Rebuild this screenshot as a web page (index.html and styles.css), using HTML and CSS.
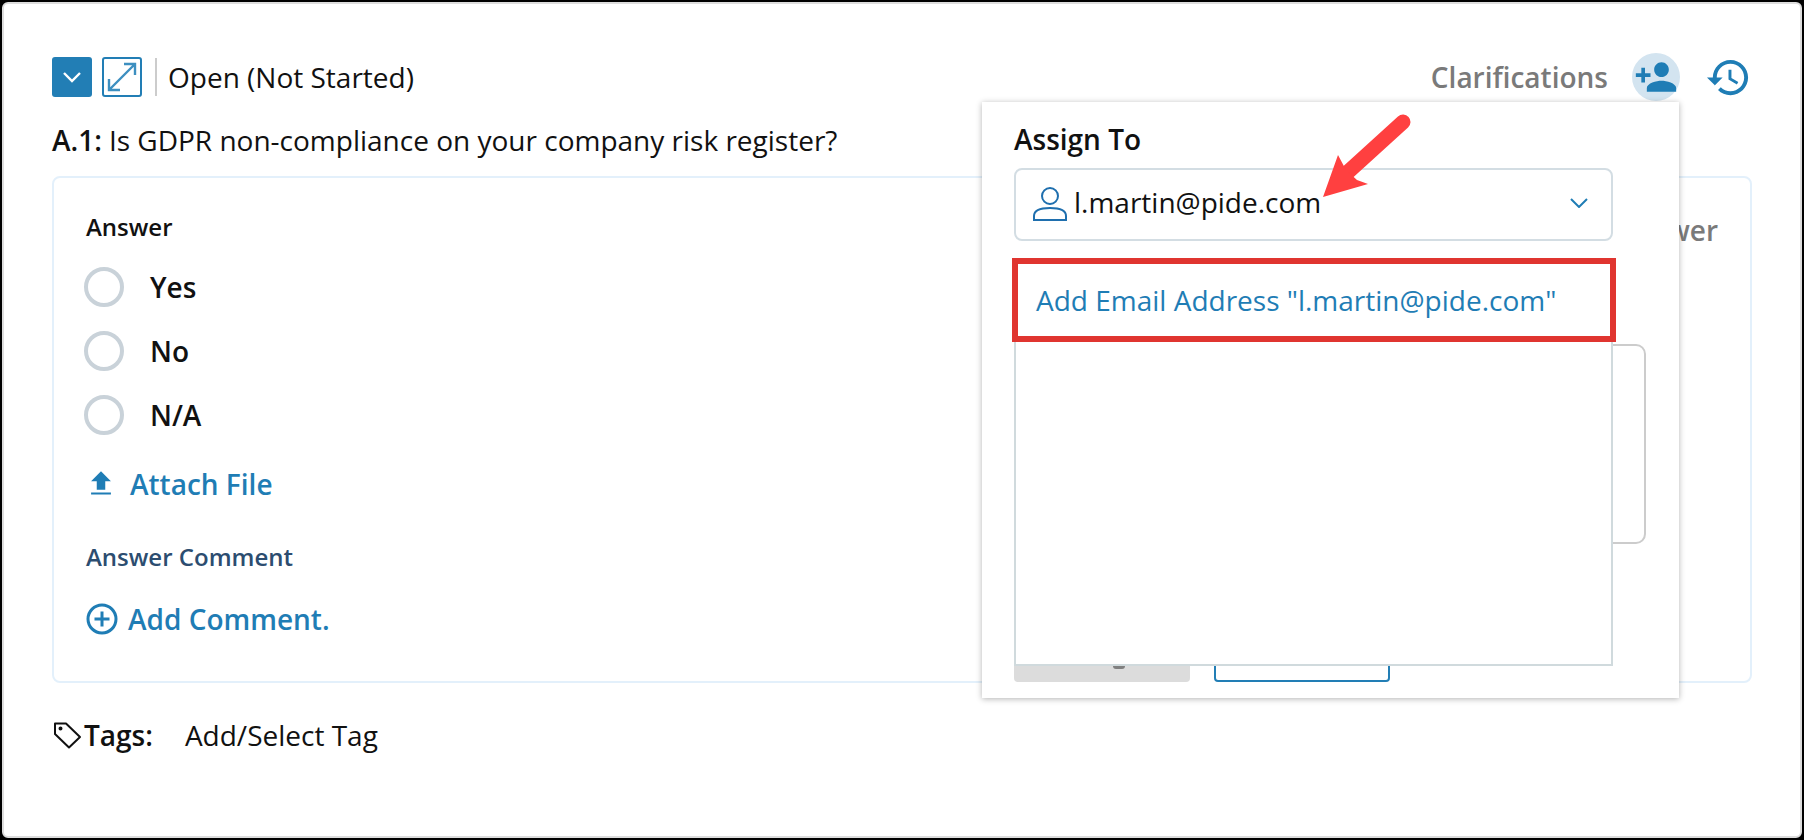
FILE: index.html
```html
<!DOCTYPE html>
<html lang="en">
<head>
    <meta charset="UTF-8">
    <meta name="viewport" content="width=device-width, initial-scale=1.0">
    <title>Question A.1</title>
    <link rel="stylesheet" href="styles.css">
</head>
<body>
    <div class="frame">
        <div class="headRow">
            <div class="headLeft">
                <span class="iconBtn solidBtn">
                    <svg width="20" height="12" viewBox="0 0 20 12"><path d="M2 2l8 8 8-8" fill="none" stroke="#fff" stroke-width="2.4"/></svg>
                </span>
                <span class="iconBtn lineBtn">
                    <svg width="30" height="30" viewBox="0 0 30 30" fill="none" stroke="#3d8fc0" stroke-width="2.4"><path d="M2 28L28 2M17 2h11v11M2 17v11h11"/></svg>
                </span>
                <span class="divider"></span>
                <span class="status">Open (Not Started)</span>
            </div>
            <div class="headRight">
                <span class="clarify">Clarifications</span>
                <span class="assignIcon">
                    <svg width="44" height="44" viewBox="0 0 24 24" fill="#1f7db5"><path d="M15 12c2.21 0 4-1.79 4-4s-1.79-4-4-4-4 1.79-4 4 1.79 4 4 4zm-9-2V7H4v3H1v2h3v3h2v-3h3v-2H6zm9 4c-2.67 0-8 1.34-8 4v2h16v-2c0-2.66-5.33-4-8-4z"/></svg>
                </span>
                <svg class="historyIcon" width="47" height="47" viewBox="0 0 24 24" fill="#1f7db5"><path d="M13 3c-4.97 0-9 4.03-9 9H1l3.89 3.89.07.14L9 12H6c0-3.87 3.13-7 7-7s7 3.13 7 7-3.13 7-7 7c-1.93 0-3.68-.79-4.94-2.06l-1.42 1.42C8.27 19.99 10.51 21 13 21c4.97 0 9-4.03 9-9s-4.03-9-9-9zm-1 5v5l4.28 2.54.72-1.21-3.5-2.08V8H12z"/></svg>
            </div>
        </div>

        <div class="question"><b>A.1:</b> <span>Is GDPR non-compliance on your company risk register?</span></div>

        <div class="card">
            <div class="cardMain">
                <div class="answerLabel">Answer</div>
                <div class="radioRow"><span class="radio"></span><span>Yes</span></div>
                <div class="radioRow"><span class="radio"></span><span>No</span></div>
                <div class="radioRow"><span class="radio"></span><span>N/A</span></div>
                <div class="attach">
                    <svg width="34" height="34" viewBox="0 0 24 24" fill="#1f7db5"><path d="M9 16h6v-6h4l-7-7-7 7h4zm-4 2h14v1.400H5z"/></svg>
                    <span>Attach File</span>
                </div>
                <div class="commentLabel">Answer Comment</div>
                <div class="addComment">
                    <svg width="32" height="32" viewBox="0 0 32 32" fill="none" stroke="#1f7db5" stroke-width="3"><circle cx="16" cy="16" r="14"/><path d="M8.500 16h15M16 8.500v15"/></svg>
                    <span>Add Comment.</span>
                </div>
            </div>
            <div class="answerLink">Answer</div>
        </div>

        <div class="tags">
            <svg width="30" height="30" viewBox="0 0 30 30" fill="none" stroke="#111" stroke-width="2" stroke-linejoin="round"><path d="M3 3.500h11l14 13.500-11 10.500L3 14z"/><circle cx="8.500" cy="8.500" r="1" fill="#111"/></svg>
            <b>Tags:</b>
            <span class="tagAdd">Add/Select Tag</span>
        </div>

        <div class="popup">
            <div class="popupLabel">Assign To</div>
            <div class="assignSelect">
                <svg width="36" height="36" viewBox="0 0 36 36" fill="none" stroke="#1f6fae" stroke-width="2"><circle cx="18" cy="10" r="8"/><path d="M2 34v-4c0-5 6-8 16-8s16 3 16 8v4z"/></svg>
                <span class="assignValue">l.martin@pide.com</span>
                <svg class="selectArrow" width="18" height="10" viewBox="0 0 18 10"><path d="M1 1l8 8 8-8" fill="none" stroke="#1f7db5" stroke-width="2"/></svg>
            </div>
            <div class="noteBox"></div>
            <div class="popupBtns">
                <span class="grayBtn"><i class="grayMark"></i></span>
                <span class="outlineBtn"></span>
            </div>
            <div class="assignMenu">
                <div class="assignItem">Add Email Address "l.martin@pide.com"</div>
            </div>
            <div class="redBox"></div>
        </div>

        <svg class="redArrow" width="100" height="100" viewBox="0 0 100 100">
            <path d="M83 10L28 60" stroke="#ff4040" stroke-width="15" stroke-linecap="round"/>
            <path d="M3 85L18 43 26 58 37 68 48 72z" fill="#ff4040"/>
        </svg>
    </div>
</body>
</html>
```

FILE: styles.css
```css
*{
    padding: 0px;
    margin: 0px;
    box-sizing: border-box;
}
body{
    margin: 0px;
    padding: 2px;
    background: #000;
    color: #111;
    font-family: "Open Sans", "Liberation Sans", sans-serif;
}
.frame{
    position: relative;
    width: 1800px;
    height: 836px;
    background: #fff;
    border: 2px solid #ddd;
    border-radius: 6px;
    padding: 53px 48px 0px;
    overflow: hidden;
}
.headRow{
    display: flex;
    justify-content: space-between;
    align-items: center;
    height: 40px;
}
.headLeft,
.headRight{
    display: flex;
    align-items: center;
}
.iconBtn{
    display: flex;
    align-items: center;
    justify-content: center;
    width: 40px;
    height: 40px;
    border-radius: 3px;
    margin-right: 10px;
}
.solidBtn{
    background: #227eb5;
}
.lineBtn{
    border: 2px solid #227eb5;
}
.divider{
    width: 2px;
    height: 38px;
    background: #ccc;
    margin: 0px 11px 0px 3px;
}
.status{
    font-size: 28px;
}
.clarify{
    font-size: 28px;
    font-weight: 600;
    color: #7a7a7a;
    margin-right: 24px;
}
.assignIcon{
    display: flex;
    align-items: center;
    justify-content: center;
    width: 48px;
    height: 48px;
    border-radius: 50%;
    background: #d3e4f0;
}
.historyIcon{
    margin: 0px 0px 0px 25px;
}
.question{
    display: flex;
    gap: 7px;
    margin-top: 24px;
    font-size: 28px;
    line-height: 38px;
}
.question b{
    font-weight: 600;
}
.card{
    display: flex;
    justify-content: space-between;
    height: 507px;
    margin-top: 17px;
    padding: 33px 32px;
    border: 2px solid #e3f0fb;
    border-radius: 8px;
}
.answerLabel{
    font-size: 24px;
    font-weight: 600;
    line-height: 32px;
    margin-bottom: 12px;
}
.radioRow{
    display: flex;
    align-items: center;
    height: 64px;
    font-size: 28px;
    font-weight: 600;
}
.radio{
    width: 40px;
    height: 40px;
    margin: 0px 26px 0px -2px;
    border: 4px solid #c9d2d9;
    border-radius: 50%;
}
.attach{
    display: flex;
    align-items: center;
    gap: 12px;
    margin: 13px 0px 0px -2px;
    height: 48px;
    color: #1f7db5;
    font-size: 28px;
    font-weight: 600;
}
.commentLabel{
    margin-top: 33px;
    color: #2c4d70;
    font-size: 24px;
    font-weight: 600;
    line-height: 32px;
}
.addComment{
    display: flex;
    align-items: center;
    gap: 10px;
    margin-top: 27px;
    color: #1f7db5;
    font-size: 28px;
    font-weight: 600;
}
.answerLink{
    color: #7a7a7a;
    font-size: 28px;
    font-weight: 600;
}
.tags{
    display: flex;
    align-items: center;
    margin-top: 33px;
    font-size: 28px;
}
.tags svg{
    margin-right: 2px;
}
.tags b{
    font-weight: 600;
}
.tagAdd{
    margin-left: 32px;
}
.popup{
    position: absolute;
    left: 978px;
    top: 98px;
    width: 697px;
    height: 596px;
    padding: 18px 32px;
    background: #fff;
    box-shadow: 0px 1px 6px rgba(0, 0, 0, 0.3);
}
.popupLabel{
    font-size: 28px;
    font-weight: 600;
    line-height: 38px;
}
.assignSelect{
    display: flex;
    align-items: flex-start;
    width: 599px;
    height: 73px;
    margin-top: 10px;
    padding: 16px 23px 0px 16px;
    border: 2px solid #d3dde3;
    border-radius: 8px;
}
.assignValue{
    flex: 1;
    margin: -3px 0px 0px 6px;
    font-size: 28px;
}
.selectArrow{
    margin-top: 12px;
}
.noteBox{
    width: 630px;
    height: 200px;
    margin: 103px 0px 0px 2px;
    border: 2px solid #ccc;
    border-radius: 10px;
}
.popupBtns{
    display: flex;
    gap: 24px;
    margin-top: 96px;
}
.grayBtn,
.outlineBtn{
    width: 176px;
    height: 42px;
    border-radius: 4px;
}
.grayBtn{
    display: flex;
    justify-content: center;
    background: #dcdcdc;
}
.grayMark{
    width: 12px;
    height: 3px;
    margin: 26px 0px 0px 34px;
    border-radius: 0px 0px 6px 6px;
    background: #808080;
}
.outlineBtn{
    border: 2px solid #227eb5;
}
.assignMenu{
    position: absolute;
    left: 32px;
    top: 160px;
    width: 599px;
    height: 404px;
    padding-top: 17px;
    background: #fff;
    border: 2px solid #d0dadd;
}
.assignItem{
    padding-left: 20px;
    color: #1f7db5;
    font-size: 28px;
    line-height: 38px;
}
.redBox{
    position: absolute;
    left: 30px;
    top: 156px;
    width: 604px;
    height: 84px;
    border: 6px solid #e03530;
}
.redArrow{
    position: absolute;
    left: 1316px;
    top: 108px;
}
```
